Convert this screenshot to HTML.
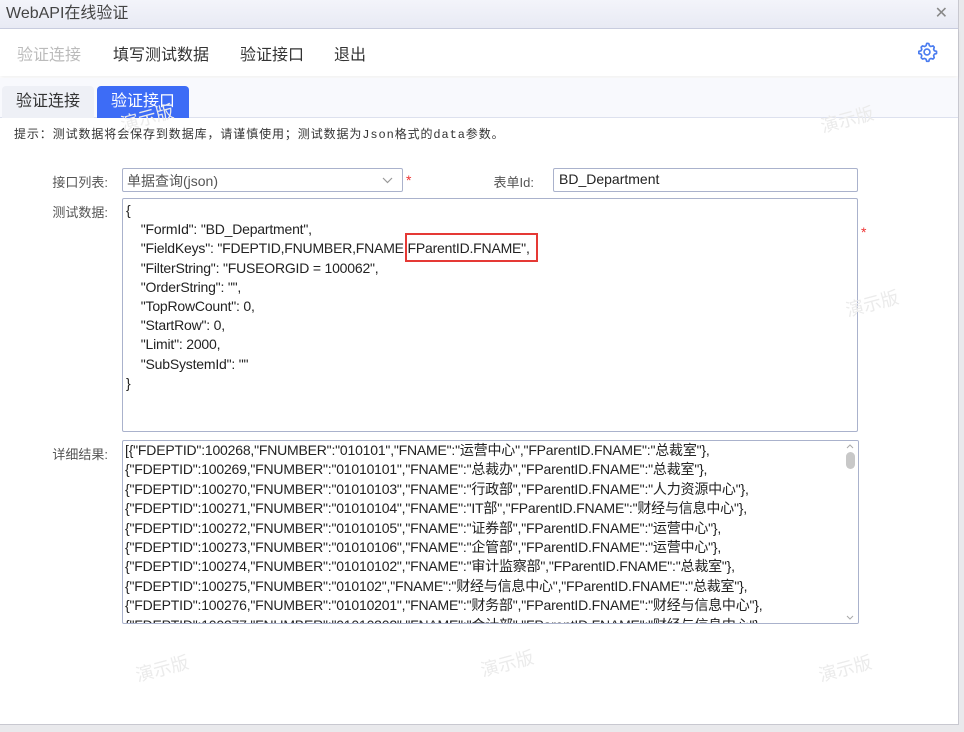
<!DOCTYPE html>
<html><head><meta charset="utf-8"><style>
*{margin:0;padding:0;box-sizing:border-box}
body{width:964px;height:732px;background:#e9e9ec;font-family:"Liberation Sans","Noto Sans CJK SC",sans-serif;position:relative;overflow:hidden;color:#333}
.win{position:absolute;left:0;top:0;width:959px;height:725px;background:#fff;border-right:1px solid #c8c8d0;border-bottom:1px solid #c8c8d0}
.title{position:absolute;left:0;top:0;width:958px;height:29px;background:linear-gradient(#f3f4fa,#e8eaf4);border-bottom:1px solid #c9cde0;font-size:16px;color:#444;line-height:28px;padding-left:6px}
.close{position:absolute;right:10px;top:0;font-size:16px;color:#888}
.menu{position:absolute;top:29px;left:0;width:958px;height:47px;background:#fff;box-shadow:0 2px 4px rgba(0,0,0,.06)}
.menu span{position:absolute;top:12px;font-size:16px;color:#333}
.tabbar{position:absolute;top:78px;left:0;width:958px;height:40px;background:#f8f9fd;border-bottom:1px solid #dde1ee}
.tab{position:absolute;top:8px;height:32px;width:92px;text-align:center;line-height:31px;font-size:16px;border-radius:4px 4px 0 0}
.hint{position:absolute;left:14px;top:125px;font-size:12px;color:#333;font-family:"Liberation Mono","Noto Sans CJK SC",monospace;letter-spacing:0.9px}
.lbl{position:absolute;font-size:13px;color:#555;text-align:right;width:100px}
.box{position:absolute;border:1px solid #aab2cc;border-radius:2px;background:#fff}
.star{position:absolute;color:#e33;font-size:14px}
pre{font-family:"Liberation Sans","Noto Sans CJK SC",sans-serif;font-size:14px;color:#222;white-space:pre;letter-spacing:-0.2px}
.wm{position:absolute;color:#ebebeb;font-size:18px;transform:rotate(-15deg);font-family:"Noto Sans CJK SC",sans-serif}
</style></head><body>
<div class="win">
<div class="title">WebAPI在线验证<span class="close">✕</span></div>
<div class="menu">
<span style="left:17px;color:#bbb">验证连接</span>
<span style="left:113px">填写测试数据</span>
<span style="left:240px">验证接口</span>
<span style="left:334px">退出</span>
<svg style="position:absolute;left:916px;top:12px" width="22" height="22" viewBox="0 0 24 24" fill="none" stroke="#4a7cf0" stroke-width="1.8"><path d="M12 2.5l2 .3.6 2.3 1.6.9 2.3-.7 1.4 1.5-.7 2.3.9 1.6 2.3.6v2.4l-2.3.6-.9 1.6.7 2.3-1.4 1.5-2.3-.7-1.6.9-.6 2.3h-2.4l-.6-2.3-1.6-.9-2.3.7-1.5-1.5.7-2.3-.9-1.6-2.3-.6v-2.4l2.3-.6.9-1.6-.7-2.3 1.5-1.5 2.3.7 1.6-.9.6-2.3z" stroke-linejoin="round"/><circle cx="12" cy="12" r="3.2"/></svg>
</div>
<div class="tabbar">
<div class="tab" style="left:2px;background:#eef0f6;color:#333">验证连接</div>
<div class="tab" style="left:97px;background:#3d6cf6;color:#fff">验证接口</div>
</div>
<div class="hint">提示：测试数据将会保存到数据库，请谨慎使用；测试数据为Json格式的data参数。</div>

<div class="lbl" style="left:8px;top:172px">接口列表:</div>
<div class="box" style="left:122px;top:168px;width:281px;height:24px;font-size:14px;color:#555;padding:2px 4px">单据查询(json)<svg style="position:absolute;right:9px;top:8px" width="11" height="7" viewBox="0 0 11 7" fill="none" stroke="#999" stroke-width="1.2"><path d="M1 1l4.5 4.5L10 1"/></svg></div>
<span class="star" style="left:406px;top:172px">*</span>
<div class="lbl" style="left:434px;top:172px">表单Id:</div>
<div class="box" style="left:553px;top:168px;width:305px;height:24px;font-size:14px;color:#222;padding:2px 5px">BD_Department</div>

<div class="lbl" style="left:8px;top:202px">测试数据:</div>
<div class="box" style="left:122px;top:198px;width:736px;height:234px;padding:2px 3px">
<pre style="line-height:19.2px">{
    "FormId": "BD_Department",
    "FieldKeys": "FDEPTID,FNUMBER,FNAME,FParentID.FNAME",
    "FilterString": "FUSEORGID = 100062",
    "OrderString": "",
    "TopRowCount": 0,
    "StartRow": 0,
    "Limit": 2000,
    "SubSystemId": ""
}</pre></div>
<div style="position:absolute;left:405px;top:233px;width:133px;height:29px;border:2px solid #e53935"></div>
<span class="star" style="left:861px;top:224px">*</span>

<div class="lbl" style="left:8px;top:444px">详细结果:</div>
<div class="box" style="left:122px;top:440px;width:737px;height:184px;overflow:hidden;padding:0px 2px">
<pre style="line-height:19.4px">[{"FDEPTID":100268,"FNUMBER":"010101","FNAME":"运营中心","FParentID.FNAME":"总裁室"},
{"FDEPTID":100269,"FNUMBER":"01010101","FNAME":"总裁办","FParentID.FNAME":"总裁室"},
{"FDEPTID":100270,"FNUMBER":"01010103","FNAME":"行政部","FParentID.FNAME":"人力资源中心"},
{"FDEPTID":100271,"FNUMBER":"01010104","FNAME":"IT部","FParentID.FNAME":"财经与信息中心"},
{"FDEPTID":100272,"FNUMBER":"01010105","FNAME":"证券部","FParentID.FNAME":"运营中心"},
{"FDEPTID":100273,"FNUMBER":"01010106","FNAME":"企管部","FParentID.FNAME":"运营中心"},
{"FDEPTID":100274,"FNUMBER":"01010102","FNAME":"审计监察部","FParentID.FNAME":"总裁室"},
{"FDEPTID":100275,"FNUMBER":"010102","FNAME":"财经与信息中心","FParentID.FNAME":"总裁室"},
{"FDEPTID":100276,"FNUMBER":"01010201","FNAME":"财务部","FParentID.FNAME":"财经与信息中心"},
{"FDEPTID":100277,"FNUMBER":"01010202","FNAME":"会计部","FParentID.FNAME":"财经与信息中心"}</pre>
<div style="position:absolute;right:0;top:0;width:14px;height:182px;background:#fff"></div>
<div style="position:absolute;right:3px;top:11px;width:9px;height:17px;background:#c8c8c8;border-radius:5px"></div>
<svg style="position:absolute;right:4px;top:3px" width="8" height="5" viewBox="0 0 8 5" fill="none" stroke="#aaa"><path d="M1 4l3-3 3 3"/></svg>
<svg style="position:absolute;right:4px;bottom:3px" width="8" height="5" viewBox="0 0 8 5" fill="none" stroke="#aaa"><path d="M1 1l3 3 3-3"/></svg>
</div>

<div class="wm" style="left:120px;top:104px">演示版</div>
<div class="wm" style="left:820px;top:106px">演示版</div>
<div class="wm" style="left:845px;top:290px">演示版</div>
<div class="wm" style="left:135px;top:655px">演示版</div>
<div class="wm" style="left:480px;top:650px">演示版</div>
<div class="wm" style="left:818px;top:655px">演示版</div>
</div>
</body></html>
